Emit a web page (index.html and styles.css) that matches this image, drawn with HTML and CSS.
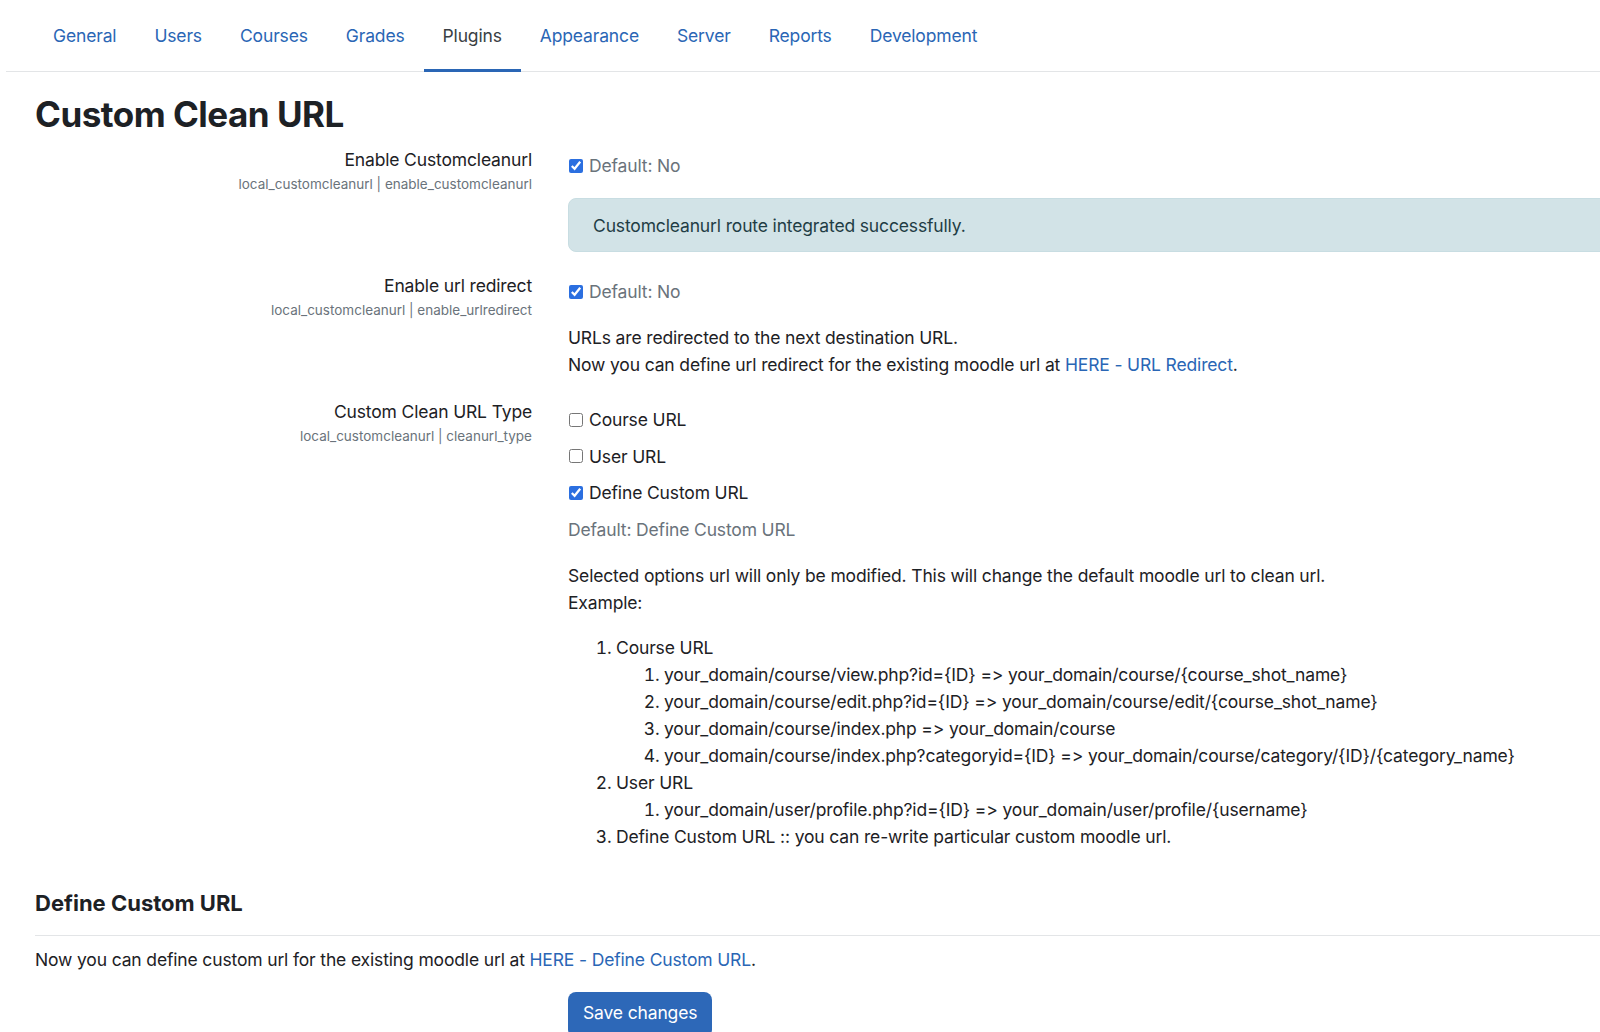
FILE: index.html
```html
<!DOCTYPE html>
<html lang="en">
<head>
    <meta charset="UTF-8">
    <title>Custom Clean URL</title>
    <link rel="stylesheet" href="styles.css">
</head>
<body>

    <div class="tabs">
        <a href="#">General</a>
        <a href="#">Users</a>
        <a href="#">Courses</a>
        <a href="#">Grades</a>
        <a href="#" class="active">Plugins</a>
        <a href="#">Appearance</a>
        <a href="#">Server</a>
        <a href="#">Reports</a>
        <a href="#">Development</a>
    </div>

    <div class="main">
        <h1>Custom Clean URL</h1>

        <div class="setting">
            <div class="label">
                <div class="name">Enable Customcleanurl</div>
                <div class="key">local_customcleanurl | enable_customcleanurl</div>
            </div>
            <div class="control">
                <label class="check"><input type="checkbox" checked> <span class="muted">Default: No</span></label>
                <div class="alert">Customcleanurl route integrated successfully.</div>
            </div>
        </div>

        <div class="setting">
            <div class="label">
                <div class="name">Enable url redirect</div>
                <div class="key">local_customcleanurl | enable_urlredirect</div>
            </div>
            <div class="control">
                <label class="check"><input type="checkbox" checked> <span class="muted">Default: No</span></label>
                <p class="desc">URLs are redirected to the next destination URL.<br>
                Now you can define url redirect for the existing moodle url at <a href="#">HERE - URL Redirect</a>.</p>
            </div>
        </div>

        <div class="setting">
            <div class="label">
                <div class="name">Custom Clean URL Type</div>
                <div class="key">local_customcleanurl | cleanurl_type</div>
            </div>
            <div class="control types">
                <label class="check"><input type="checkbox"> Course URL</label>
                <label class="check"><input type="checkbox"> User URL</label>
                <label class="check"><input type="checkbox" checked> Define Custom URL</label>
                <div class="muted">Default: Define Custom URL</div>
                <p class="desc">Selected options url will only be modified. This will change the default moodle url to clean url.<br>
                Example:</p>
                <ol>
                    <li>Course URL
                        <ol>
                            <li>your_domain/course/view.php?id={ID} =&gt; your_domain/course/{course_shot_name}</li>
                            <li>your_domain/course/edit.php?id={ID} =&gt; your_domain/course/edit/{course_shot_name}</li>
                            <li>your_domain/course/index.php =&gt; your_domain/course</li>
                            <li>your_domain/course/index.php?categoryid={ID} =&gt; your_domain/course/category/{ID}/{category_name}</li>
                        </ol>
                    </li>
                    <li>User URL
                        <ol>
                            <li>your_domain/user/profile.php?id={ID} =&gt; your_domain/user/profile/{username}</li>
                        </ol>
                    </li>
                    <li>Define Custom URL :: you can re-write particular custom moodle url.</li>
                </ol>
            </div>
        </div>

        <h3>Define Custom URL</h3>
        <hr>
        <p class="note">Now you can define custom url for the existing moodle url at <a href="#">HERE - Define Custom URL</a>.</p>

        <div class="actions">
            <button type="button">Save changes</button>
        </div>
    </div>

</body>
</html>
```

FILE: styles.css
```css
body {
    font-family: Inter, "Noto Sans", sans-serif;
    font-size: 17.5px;
    letter-spacing: -0.15px;
    line-height: 27px;
    font-variant-ligatures: none;
    font-feature-settings: "calt" 0, "liga" 0;
    color: #1d2125;
    margin: 0;
    padding: 0;
    background-color: #ffffff;
    overflow: hidden;
}
a {
    color: #2a66b5;
    text-decoration: none;
}
.tabs {
    display: flex;
    margin-left: 6px;
    padding-left: 28px;
    border-bottom: 1px solid #e3e5e7;
}
.tabs a {
    display: block;
    padding: 22px 19px 20px;
    border-bottom: 3px solid transparent;
    margin-bottom: -1px;
}
.tabs a.active {
    color: #3a3f44;
    border-bottom-color: #2a66b5;
}
.main {
    padding-left: 35px;
}
h1 {
    font-size: 35px;
    line-height: 43px;
    font-weight: 700;
    margin: 21px 0 10px;
    letter-spacing: -0.5px;
}
.setting {
    display: grid;
    grid-template-columns: 497px 1fr;
    column-gap: 36px;
    margin-bottom: 20px;
}
.label {
    text-align: right;
}
.key {
    font-size: 13.5px;
    letter-spacing: 0;
    line-height: 22px;
    color: #6a737b;
}
.control {
    padding-top: 6px;
}
.check {
    display: flex;
    align-items: center;
    gap: 6px;
}
.check input {
    width: 14px;
    height: 14px;
    margin: 0 0 0 1px;
    accent-color: #2b6fe0;
}
.muted {
    color: #6a737b;
}
.alert {
    margin: 19px -60px 0 0;
    padding: 13px 24px 12px;
    background: #d2e3e7;
    border: 1px solid #c8dde2;
    border-radius: 8px;
    color: #1f3d45;
}
.desc {
    margin: 19px 0 0;
}
.types {
    padding-top: 8px;
}
.types .check {
    margin-bottom: 9.5px;
}
.types .desc {
    margin-top: 19px;
}
ol {
    margin: 18px 0 0;
    padding-left: 48px;
}
ol ol {
    margin: 0;
}
h3 {
    font-size: 22px;
    line-height: 27px;
    font-weight: 700;
    letter-spacing: 0;
    margin: 40px 0 18px;
}
hr {
    border: 0;
    border-top: 1px solid #e3e5e7;
    margin: 0 0 10px;
}
.note {
    margin: 0;
}
.actions {
    padding-left: 533px;
    padding-top: 19px;
}
button {
    font-family: inherit;
    font-size: 17.5px;
    letter-spacing: -0.15px;
    line-height: 27px;
    color: #ffffff;
    background: #2d68b8;
    border: 0;
    border-radius: 8px;
    padding: 7px 15px 12px;
}
```
